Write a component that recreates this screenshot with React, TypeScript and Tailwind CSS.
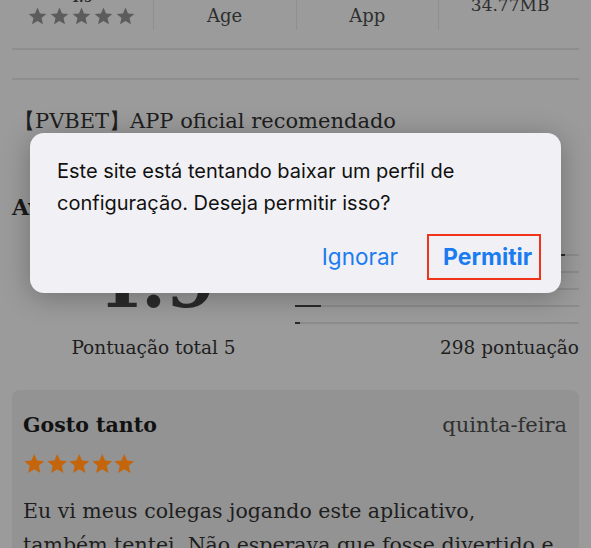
const serif = "font-['DejaVu_Serif',serif]";

function Star({ className }: { className: string }) {
  return (
    <svg viewBox="0 0 24 24" className={className} fill="currentColor">
      <path d="M12 1.8l3 7.1 7.6.6-5.8 5 1.8 7.5L12 18l-6.6 4 1.8-7.5-5.8-5 7.6-.6z" />
    </svg>
  );
}

const bars = [270, 20, 0, 26, 5];

export default function App() {
  return (
    <div className={`relative w-[591px] h-[548px] overflow-hidden bg-[#9b9b9b] ${serif}`}>
      {/* page behind the dialog */}
      <div className="flex flex-col">
        {/* stats */}
        <div className="grid grid-cols-4 mx-[10px] -mt-[30px] h-[60px]">
          <div className="flex flex-col items-center justify-end pb-[4px]">
            <span className="text-[13px] leading-[16px] font-bold text-[#2a2a2a]">4.9</span>
            <div className="flex gap-[1px] text-[#5c5c5c]">
              {[0, 1, 2, 3, 4].map((i) => (
                <Star key={i} className="w-[21px] h-[20px]" />
              ))}
            </div>
          </div>
          <div className="flex flex-col items-center justify-end pb-[2px] border-l border-[#8f8f8f]">
            <span className="text-[18px] leading-[24px] text-[#2e2e2e]">Age</span>
          </div>
          <div className="flex flex-col items-center justify-end pb-[2px] border-l border-[#8f8f8f]">
            <span className="text-[18px] leading-[24px] text-[#2e2e2e]">App</span>
          </div>
          <div className="flex flex-col items-center justify-end pb-[13px] border-l border-[#8f8f8f]">
            <span className="text-[17px] leading-[24px] text-[#2e2e2e]">34.77MB</span>
          </div>
        </div>

        <div className="mx-3 mt-[18px] h-[2px] bg-[#8e8e8e]" />
        <div className="mx-3 mt-[28px] h-[2px] bg-[#8e8e8e]" />

        <p className="mx-[14px] mt-[27px] text-[21px] leading-[28px] text-[#1e1e1e]">
          【PVBET】APP oficial recomendado
        </p>

        <h2 className="mx-3 mt-[57px] text-[22px] leading-[30px] font-bold text-[#1a1a1a]">
          Avaliações e Comentários
        </h2>

        {/* ratings */}
        <div className="flex mx-3 mt-[24px]">
          <div className="w-[283px] flex items-end justify-center pb-[13px]">
            <span className="text-[72px] leading-[72px] font-bold text-[#2a2a2a]">4.9</span>
          </div>
          <div className="flex-1 flex flex-col">
            {bars.map((w, i) => (
              <div key={i} className="h-[17px] flex items-center">
                <div className="relative w-full h-[2px] bg-[#8c8c8c]">
                  <div className="absolute left-0 top-0 h-[2px] bg-[#2a2a2a]" style={{ width: w }} />
                </div>
              </div>
            ))}
          </div>
        </div>

        <div className="flex mx-3 mt-[5px] text-[18.5px] leading-[24px] text-[#1e1e1e]">
          <div className="w-[283px] text-center">Pontuação total 5</div>
          <div className="flex-1 text-right">298 pontuação</div>
        </div>

        {/* review */}
        <div className="mx-3 mt-[30px] rounded-lg bg-[#939393] px-[11px] pt-[21px] pb-6">
          <div className="flex justify-between items-baseline pr-[1px]">
            <span className="text-[20.5px] leading-[28px] font-bold text-[#111]">Gosto tanto</span>
            <span className="text-[21px] leading-[28px] text-[#2f2f2f]">quinta-feira</span>
          </div>
          <div className="flex mt-[13px] text-[#c4650c]">
            {[0, 1, 2, 3, 4].map((i) => (
              <Star key={i} className="w-[22.5px] h-[23px]" />
            ))}
          </div>
          <p className="mt-[19px] mr-[10px] text-[20.5px] leading-[34px] text-[#1e1e1e]">
            Eu vi meus colegas jogando este aplicativo, também tentei. Não esperava que fosse divertido e viciante.
          </p>
        </div>
      </div>

      {/* alert */}
      <div className="absolute left-[30px] top-[133px] w-[531px] h-[160px] rounded-[14px] bg-[#f1f1f5] shadow-[0_4px_28px_rgba(0,0,0,0.28)] font-['Inter',sans-serif] flex flex-col">
        <p className="px-[27px] pt-[22px] text-[20px] leading-[32px] text-[#111]">
          Este site está tentando baixar um perfil de configuração. Deseja permitir isso?
        </p>
        <div className="flex justify-end items-center mt-[15px] pr-[20px] gap-[29px]">
          <span className="text-[22.5px] text-[#1a7cf0]">Ignorar</span>
          <span className="w-[114px] h-[46px] border-2 border-[#f0341c] flex items-center pl-[14px] text-[23px] font-bold text-[#1a7cf0]">
            Permitir
          </span>
        </div>
      </div>
    </div>
  );
}
